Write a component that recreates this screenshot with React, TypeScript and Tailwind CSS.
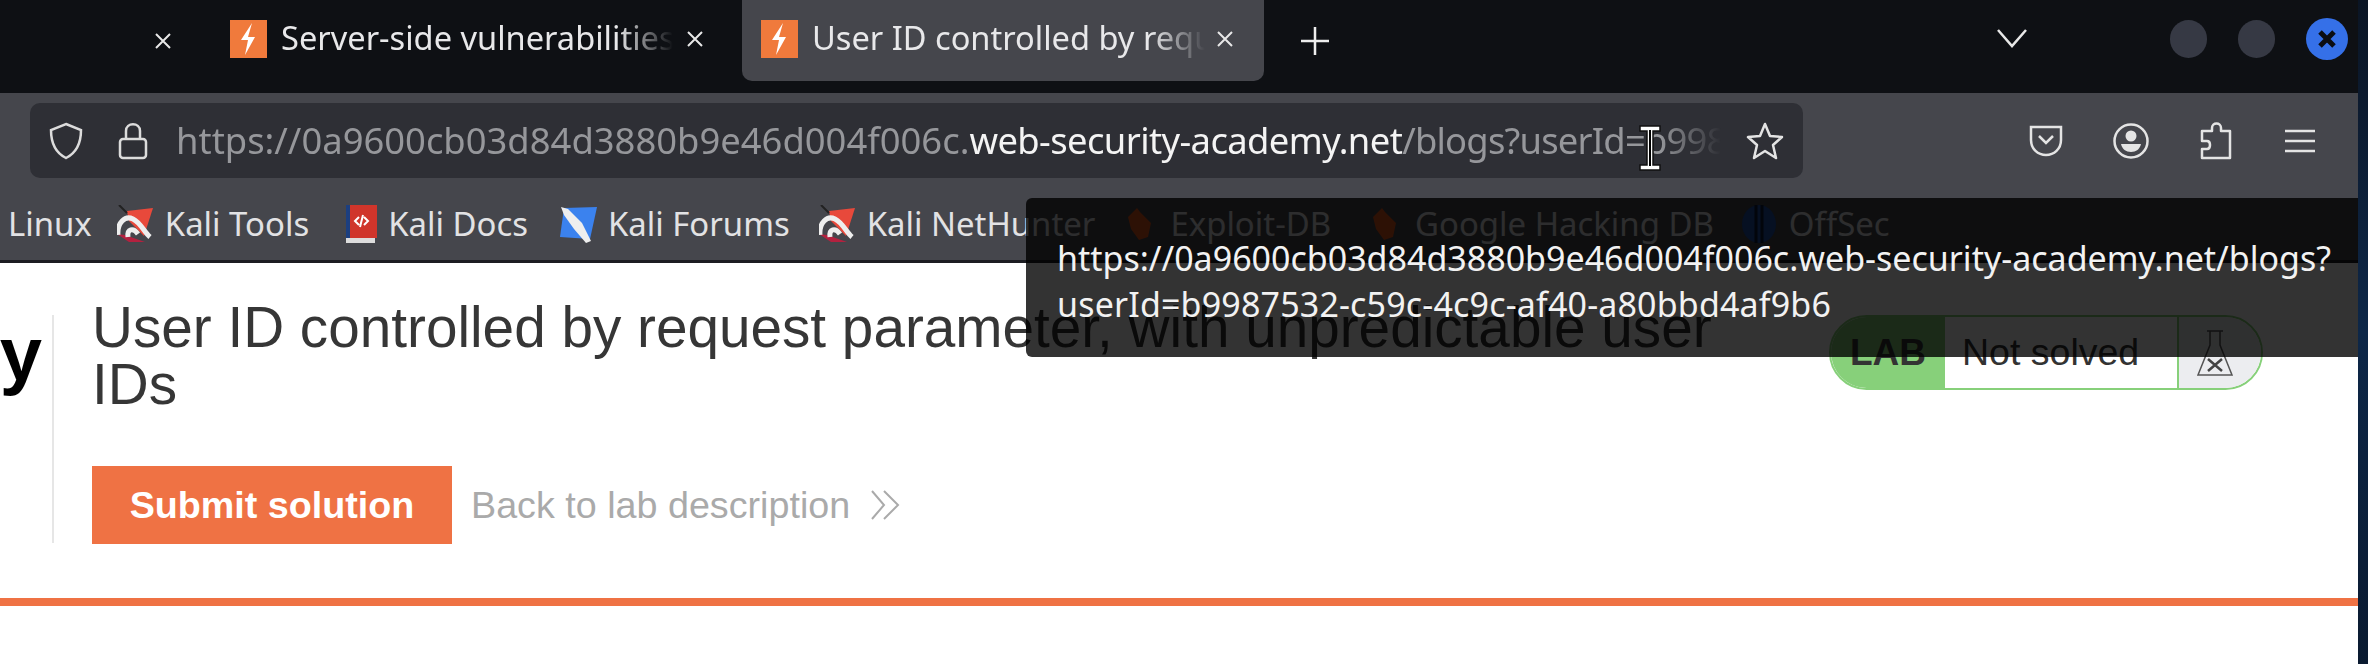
const uiFont = "font-['Noto_Sans',sans-serif]";

const Favicon = () => (
  <svg width="37" height="38" viewBox="0 0 37 38" className="shrink-0">
    <rect width="37" height="38" fill="#f07a3c" />
    <path d="M22 3 L11 20 L18 20 L15 35 L25 17 L18 17 Z" fill="#fff" />
  </svg>
);

const CloseX = () => (
  <svg width="20" height="20" viewBox="0 0 20 20" className="shrink-0">
    <path d="M3 3 L17 17 M17 3 L3 17" stroke="#e8e8e8" strokeWidth="2" />
  </svg>
);

const KaliIcon = () => (
  <svg width="37" height="38" viewBox="0 0 37 38" className="shrink-0">
    <path d="M10 6 L36 3 L27 31 L19 23 L12 16 Z" fill="#e8493b" />
    <path d="M0 29 L12 37 L28 37 L8 30 Z" fill="#b3213f" />
    <path d="M1 30 C0 18 8 10 16 14 C24 18 27 27 33 32" fill="none" stroke="#eee" strokeWidth="5" />
    <path d="M11 32 C10 24 16 22 21 29" fill="none" stroke="#eee" strokeWidth="5" />
    <path d="M2 0 L10 8" stroke="#222" strokeWidth="2" />
  </svg>
);

const DocsIcon = () => (
  <svg width="31" height="38" viewBox="0 0 31 38" className="shrink-0">
    <rect x="0" y="0" width="4" height="35" fill="#1c3f80" />
    <rect x="4" y="0" width="27" height="33" fill="#d0352b" />
    <rect x="0" y="33" width="29" height="5" fill="#ddd" />
    <path d="M13 12 L9 16 L13 20 M18 12 L22 16 L18 20 M17 10 L14 22" fill="none" stroke="#fff" strokeWidth="2" />
  </svg>
);

const ForumsIcon = () => (
  <svg width="37" height="38" viewBox="0 0 37 38" className="shrink-0">
    <path d="M4 3 L37 2 L30 34 L0 32 Z" fill="#3b82ee" />
    <path d="M1 2 L8 4 L22 18 L31 36 L26 38 L14 24 L4 10 Z" fill="#eee" />
  </svg>
);

const BugIcon = () => (
  <svg width="26" height="34" viewBox="0 0 26 34" className="shrink-0 mr-[6px]">
    <path d="M10 1 L13 5 L24 16 L21 30 L12 33 L4 22 L1 10 Z" fill="#e0551c" />
  </svg>
);

const OffSecIcon = () => (
  <svg width="34" height="38" viewBox="0 0 34 38" className="shrink-0 mr-[2px]">
    <ellipse cx="17" cy="19" rx="17" ry="19" fill="#1e4fa8" />
    <path d="M14 0 V38 M20 0 V38" stroke="#0b1a3a" strokeWidth="3" />
  </svg>
);

const Bookmark = ({ icon, label, className }: { icon: React.ReactNode; label: string; className: string }) => (
  <div className={`flex items-center gap-[11px] ${className}`}>
    {icon}
    <span className="whitespace-nowrap">{label}</span>
  </div>
);

export default function App() {
  return (
    <div className="flex w-[2368px] h-[664px] overflow-hidden bg-black">
      <div className="relative flex flex-col w-[2358px] shrink-0">
        {/* Tab strip */}
        <div className={`flex items-start h-[93px] bg-[#0e1014] text-[#e8e8ea] text-[32.6px] ${uiFont}`}>
          <div className="flex items-center justify-end w-[230px] h-[81px] pr-[57px]">
            <CloseX />
          </div>
          <div className="flex items-center w-[512px] h-[81px] pb-[4px]">
            <Favicon />
            <span className="w-[392px] ml-[14px] overflow-hidden whitespace-nowrap [mask-image:linear-gradient(90deg,#000_86%,transparent)]">
              Server-side vulnerabilities
            </span>
            <span className="ml-[12px]">
              <CloseX />
            </span>
          </div>
          <div className="flex items-center w-[522px] h-[81px] pl-[19px] pb-[4px] bg-[#45464c] rounded-b-[10px]">
            <Favicon />
            <span className="w-[393px] ml-[14px] overflow-hidden whitespace-nowrap [mask-image:linear-gradient(90deg,#000_86%,transparent)]">
              User ID controlled by request
            </span>
            <span className="ml-[10px]">
              <CloseX />
            </span>
          </div>
          <div className="flex items-center h-[81px] ml-[37px]">
            <svg width="28" height="28" viewBox="0 0 28 28">
              <path d="M14 0 V28 M0 14 H28" stroke="#eee" strokeWidth="2.5" />
            </svg>
          </div>
          <div className="flex items-center h-[75px] ml-[668px]">
            <svg width="30" height="20" viewBox="0 0 30 20">
              <path d="M1 2 L15 18 L29 2" fill="none" stroke="#e8e8e8" strokeWidth="2.5" />
            </svg>
          </div>
          <div className="flex items-center h-[77px] ml-[143px] gap-[31px]">
            <div className="w-[37px] h-[38px] rounded-full bg-[#363944]" />
            <div className="w-[37px] h-[38px] rounded-full bg-[#363944]" />
            <div className="flex items-center justify-center w-[42px] h-[42px] rounded-full bg-[#3570e8]">
              <svg width="22" height="22" viewBox="0 0 22 22">
                <path d="M4 4 L18 18 M18 4 L4 18" stroke="#0b0d12" strokeWidth="5" />
              </svg>
            </div>
          </div>
        </div>

        {/* Toolbar */}
        <div className={`flex items-center h-[105px] pl-[30px] pb-[10px] bg-[#45464c] ${uiFont}`}>
          <div className="flex items-center w-[1773px] h-[75px] rounded-[10px] bg-[#2e2f35]">
            <svg width="36" height="38" viewBox="0 0 36 38" className="ml-[18px] shrink-0">
              <path d="M18 2 L33 8 C33 22 28 31 18 36 C8 31 3 22 3 8 Z" fill="none" stroke="#dcdcdc" strokeWidth="2.5" />
            </svg>
            <svg width="30" height="38" viewBox="0 0 30 38" className="ml-[34px] shrink-0">
              <rect x="2" y="17" width="26" height="19" rx="3" fill="none" stroke="#dcdcdc" strokeWidth="2.5" />
              <path d="M8 17 V9 C8 0 22 0 22 9 V17" fill="none" stroke="#dcdcdc" strokeWidth="2.5" />
            </svg>
            <span className="w-[1545px] ml-[28px] overflow-hidden whitespace-nowrap text-[36.4px] text-[#96979b] [mask-image:linear-gradient(90deg,#000_96%,transparent)]">
              https://0a9600cb03d84d3880b9e46d004f006c.
              <span className="tracking-[-0.6px] text-[#f4f4f4]">web-security-academy.net</span>
              <span className="tracking-[-0.8px]">/blogs?userId=b9987532-c59c-4c9c-af40-a80bbd4af9b6</span>
            </span>
            <svg width="38" height="38" viewBox="0 0 38 38" className="ml-[25px] shrink-0">
              <path d="M19 2 L24 14 L36 15 L27 23 L30 36 L19 29 L8 36 L11 23 L2 15 L14 14 Z" fill="none" stroke="#e4e4e4" strokeWidth="2.5" strokeLinejoin="round" />
            </svg>
          </div>
          <svg width="34" height="32" viewBox="0 0 34 32" className="ml-[226px] shrink-0">
            <path d="M2 2 H32 V15 C32 24 25 30 17 30 C9 30 2 24 2 15 Z" fill="none" stroke="#e4e4e4" strokeWidth="2.5" />
            <path d="M10 11 L17 18 L24 11" fill="none" stroke="#e4e4e4" strokeWidth="2.5" />
          </svg>
          <svg width="36" height="36" viewBox="0 0 36 36" className="ml-[50px] shrink-0">
            <circle cx="18" cy="18" r="16.5" fill="none" stroke="#e4e4e4" strokeWidth="2.5" />
            <circle cx="18" cy="13" r="5.5" fill="#e4e4e4" />
            <path d="M8 21 H28 C27 26 23 29 18 29 C13 29 9 26 8 21 Z" fill="#e4e4e4" />
          </svg>
          <svg width="32" height="38" viewBox="0 0 32 38" className="ml-[51px] shrink-0">
            <path d="M12 9 V6 C12 0 21 0 21 6 V9 H30 V36 H2 V27 H7 C11 27 11 19 7 19 H2 V9 Z" fill="none" stroke="#e4e4e4" strokeWidth="2.5" strokeLinejoin="round" />
          </svg>
          <svg width="30" height="24" viewBox="0 0 30 24" className="ml-[53px] shrink-0">
            <path d="M0 2 H30 M0 12 H30 M0 22 H30" stroke="#e4e4e4" strokeWidth="2.5" />
          </svg>
        </div>

        {/* Bookmarks */}
        <div className={`flex items-center h-[65px] pb-[10px] pl-[8px] bg-[#45464c] border-b-[3px] border-[#1c1d22] text-[32.9px] text-[#e2e2e4] ${uiFont}`}>
          <span>Linux</span>
          <Bookmark icon={<KaliIcon />} label="Kali Tools" className="ml-[25px]" />
          <Bookmark icon={<DocsIcon />} label="Kali Docs" className="ml-[37px]" />
          <Bookmark icon={<ForumsIcon />} label="Kali Forums" className="ml-[32px]" />
          <Bookmark icon={<KaliIcon />} label="Kali NetHunter" className="ml-[29px]" />
          <Bookmark icon={<BugIcon />} label="Exploit-DB" className="ml-[32px]" />
          <Bookmark icon={<BugIcon />} label="Google Hacking DB" className="ml-[41px]" />
          <Bookmark icon={<OffSecIcon />} label="OffSec" className="ml-[28px]" />
        </div>

        {/* Lab header */}
        <div className="flex flex-1 bg-white font-['Liberation_Sans',sans-serif]">
          <div className="flex flex-col w-full">
            <div className="flex items-start h-[343px] border-b-[8px] border-[#ef7244]">
              <div className="relative flex justify-end overflow-hidden w-[54px] h-[228px] mt-[52px] border-r-2 border-[#e6e6e6]">
                <span className="mt-[-6px] pr-[10px] whitespace-nowrap font-bold text-[76px] leading-[90px] text-black">
                  Academy
                </span>
              </div>
              <div className="w-[1660px] ml-[38px] mt-[36px] mr-[1px]">
                <h2 className="text-[56.7px] leading-[57px] text-[#363636]">
                  User ID controlled by request parameter, with unpredictable user IDs
                </h2>
                <div className="flex items-center mt-[53px]">
                  <button className="w-[360px] h-[78px] bg-[#ef7244] font-bold text-[37.7px] text-white">
                    Submit solution
                  </button>
                  <span className="ml-[19px] text-[37.7px] text-[#aaaaaa]">Back to lab description</span>
                  <svg width="30" height="32" viewBox="0 0 30 32" className="ml-[20px]">
                    <path d="M2 2 L14 16 L2 30 M14 2 L28 16 L14 30" fill="none" stroke="#aaaaaa" strokeWidth="2" />
                  </svg>
                </div>
              </div>
              <div className="flex items-stretch overflow-hidden w-[434px] h-[75px] mt-[52px] ml-[76px] rounded-full border-2 border-[#87d07a]">
                <div className="flex items-center justify-center w-[114px] bg-[#87d07a] font-bold text-[37px] text-[#333333]">
                  LAB
                </div>
                <div className="flex items-center w-[234px] pl-[17px] border-r-2 border-[#87d07a] text-[37.5px] text-[#333333]">
                  Not solved
                </div>
                <div className="flex items-center justify-center flex-1 pr-[10px] bg-[#ecedf0]">
                  <svg width="38" height="48" viewBox="0 0 38 48">
                    <path d="M11 2 H27 M14 2 V16 L2 46 H36 L24 16 V2" fill="none" stroke="#555" strokeWidth="1.5" />
                    <path d="M12 30 L26 42 M26 30 L12 42" stroke="#444" strokeWidth="2.5" />
                  </svg>
                </div>
              </div>
            </div>
          </div>
        </div>

        {/* Link tooltip over the page */}
        <div className={`absolute left-[1026px] top-[198px] w-[1332px] h-[159px] pt-[37px] pl-[31px] bg-black/80 rounded-tl-[6px] rounded-bl-[6px] text-[34px] leading-[46px] text-[#f2f2f2] ${uiFont}`}>
          <div className="whitespace-nowrap">https://0a9600cb03d84d3880b9e46d004f006c.web-security-academy.net/blogs?</div>
          <div className="whitespace-nowrap tracking-[0.17px]">userId=b9987532-c59c-4c9c-af40-a80bbd4af9b6</div>
        </div>

        {/* Mouse cursor */}
        <svg width="24" height="48" viewBox="0 0 24 48" className="absolute left-[1638px] top-[124px]">
          <path d="M2 2 H22 V7 H15 V41 H22 V46 H2 V41 H9 V7 H2 Z" fill="#fff" stroke="#111" strokeWidth="1.5" />
          <path d="M12 6 V42" stroke="#000" strokeWidth="2" />
        </svg>
      </div>

      {/* Desktop wallpaper peeking out at the window edge */}
      <div className="flex-1 bg-gradient-to-b from-[#0b1524] via-[#0d2748] to-[#0a1a30]" />
    </div>
  );
}
